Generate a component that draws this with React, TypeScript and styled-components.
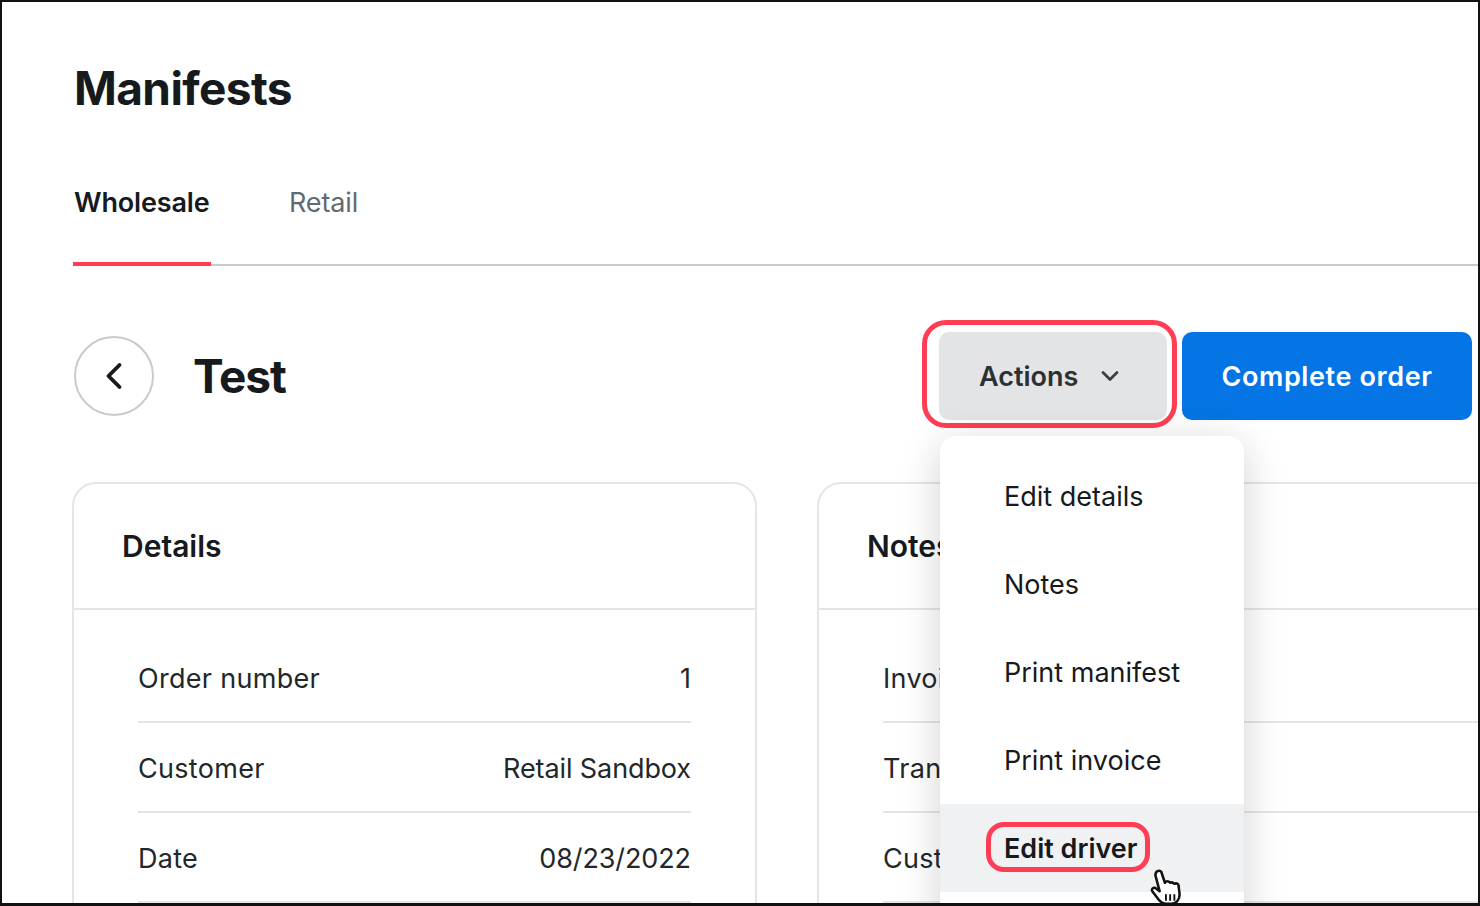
import React from "react";
import styled, { createGlobalStyle } from "styled-components";
import { ChevronDown, ChevronLeft } from "lucide-react";

const GlobalStyle = createGlobalStyle`
  html, body {
    margin: 0;
    padding: 0;
    background: #fff;
  }
  * {
    box-sizing: border-box;
  }
`;

const Frame = styled.div`
  width: 1480px;
  height: 906px;
  border: 2px solid #111;
  border-bottom-width: 3px;
  overflow: hidden;
  background: #fff;
  padding-left: 71px;
  font-family: Inter, "Liberation Sans", sans-serif;
  color: #171a1c;
`;

const PageTitle = styled.h1`
  margin: 0;
  padding: 59px 0 0 1px;
  font-size: 46px;
  line-height: 54px;
  font-weight: 700;
  letter-spacing: -0.6px;
`;

const TabBar = styled.div`
  display: flex;
  margin-top: 70px;
  height: 81px;
  border-bottom: 2px solid #c8cacc;
`;

const Tab = styled.div<{ $active?: boolean }>`
  height: 81px;
  padding-left: 1px;
  width: ${(p) => (p.$active ? "138px" : "auto")};
  margin-right: 77px;
  font-size: 27px;
  line-height: 36px;
  letter-spacing: -0.15px;
  font-weight: ${(p) => (p.$active ? 600 : 400)};
  color: ${(p) => (p.$active ? "#171a1c" : "#5f6b70")};
  border-bottom: ${(p) => (p.$active ? "4px solid #ff3e55" : "none")};
`;

const Toolbar = styled.div`
  display: flex;
  align-items: center;
  height: 88px;
  margin-top: 66px;
  padding-right: 6px;
`;

const BackButton = styled.div`
  width: 80px;
  height: 80px;
  margin-left: 1px;
  border: 2px solid #c8cacc;
  border-radius: 50%;
  display: flex;
  align-items: center;
  justify-content: center;
`;

const OrderTitle = styled.h2`
  margin: 0 0 0 39px;
  flex: 1;
  font-size: 46px;
  line-height: 54px;
  font-weight: 700;
  letter-spacing: -1.1px;
`;

const ActionsWrap = styled.div`
  position: relative;
  margin-right: 15px;
  z-index: 2;
`;

const ActionsButton = styled.div`
  width: 228px;
  height: 88px;
  padding-left: 40px;
  border-radius: 10px;
  background: #e3e4e6;
  color: #2b3033;
  font-size: 27px;
  font-weight: 600;
  display: flex;
  align-items: center;
  gap: 18px;
`;

const Highlight = styled.span`
  position: absolute;
  border: 5px solid #ff3e55;
  pointer-events: none;
`;

const ActionsHighlight = styled(Highlight)`
  left: -17px;
  top: -12px;
  width: 255px;
  height: 108px;
  border-radius: 24px;
`;

const PrimaryButton = styled.div`
  width: 290px;
  height: 88px;
  border-radius: 10px;
  background: #0574e4;
  color: #fff;
  font-size: 27px;
  font-weight: 600;
  letter-spacing: 0.6px;
  display: flex;
  align-items: center;
  justify-content: center;
`;

const Menu = styled.div`
  position: absolute;
  left: 1px;
  top: 104px;
  width: 304px;
  height: 520px;
  padding-top: 16px;
  background: #fff;
  border-radius: 16px;
  box-shadow: 0 8px 40px rgba(0, 0, 0, 0.18);
`;

const MenuItem = styled.div<{ $hover?: boolean }>`
  position: relative;
  height: 88px;
  padding-left: 64px;
  display: flex;
  align-items: center;
  font-size: 27px;
  color: #171a1c;
  font-weight: ${(p) => (p.$hover ? 600 : 400)};
  background: ${(p) => (p.$hover ? "#f0f1f3" : "transparent")};
`;

const DriverHighlight = styled(Highlight)`
  left: 46px;
  top: 18px;
  width: 164px;
  height: 50px;
  border-radius: 18px;
`;

const Pointer = styled.svg`
  position: absolute;
  left: 210px;
  top: 64px;
`;

const Cards = styled.div`
  display: flex;
  gap: 60px;
  margin-top: 62px;
  margin-left: -1px;
`;

const Card = styled.section<{ $wide?: boolean }>`
  flex: 0 0 ${(p) => (p.$wide ? "900px" : "685px")};
  height: 600px;
  border: 2px solid #e4e5e7;
  border-radius: 24px;
`;

const CardHeader = styled.div`
  height: 126px;
  padding: 43px 0 0 48px;
  border-bottom: 2px solid #e4e5e7;
  font-size: 30px;
  line-height: 38px;
  font-weight: 600;
`;

const Rows = styled.div`
  padding: 23px 64px 0;
`;

const Row = styled.div`
  display: flex;
  justify-content: space-between;
  align-items: center;
  height: 90px;
  padding-top: 2px;
  border-bottom: 2px solid #e4e5e7;
  font-size: 27px;
  color: #22272a;
`;

const RowLabel = styled.span`
  letter-spacing: 0.3px;
`;

const RowValue = styled.span`
  letter-spacing: -0.1px;
`;

const details = [
  ["Order number", "1"],
  ["Customer", "Retail Sandbox"],
  ["Date", "08/23/2022"],
];

const notes = ["Invoice", "Transporter", "Customer"];

const menuItems = ["Edit details", "Notes", "Print manifest", "Print invoice"];

const App = () => {
  return (
    <Frame>
      <GlobalStyle />
      <PageTitle>Manifests</PageTitle>
      <TabBar>
        <Tab $active>Wholesale</Tab>
        <Tab>Retail</Tab>
      </TabBar>
      <Toolbar>
        <BackButton>
          <ChevronLeft size={44} strokeWidth={2.1} color="#171a1c" />
        </BackButton>
        <OrderTitle>Test</OrderTitle>
        <ActionsWrap>
          <ActionsButton>
            Actions
            <ChevronDown size={28} strokeWidth={2.4} color="#3a4044" />
          </ActionsButton>
          <ActionsHighlight />
          <Menu>
            {menuItems.map((item) => (
              <MenuItem key={item}>{item}</MenuItem>
            ))}
            <MenuItem $hover>
              Edit driver
              <DriverHighlight />
              <Pointer width="34" height="40" viewBox="0 0 32 38">
                <path
                  d="M7 3c2-1 4 0 4 2l3 9 1-1c2-1 3 0 4 1 2-1 3 0 4 1 2-1 4 0 4 2l1 8c0 5-3 9-8 9h-5c-3 0-5-2-7-4L2 22c-1-2 1-4 3-3l4 3L5 7C5 5 5 4 7 3z"
                  fill="#fff"
                  stroke="#111"
                  strokeWidth="2.4"
                  strokeLinejoin="round"
                />
                <path d="M15 25v6M19 25v6M23 25v6" stroke="#111" strokeWidth="1.8" />
              </Pointer>
            </MenuItem>
          </Menu>
        </ActionsWrap>
        <PrimaryButton>Complete order</PrimaryButton>
      </Toolbar>
      <Cards>
        <Card>
          <CardHeader>Details</CardHeader>
          <Rows>
            {details.map(([label, value]) => (
              <Row key={label}>
                <RowLabel>{label}</RowLabel>
                <RowValue>{value}</RowValue>
              </Row>
            ))}
          </Rows>
        </Card>
        <Card $wide>
          <CardHeader>Notes</CardHeader>
          <Rows>
            {notes.map((label) => (
              <Row key={label}>
                <RowLabel>{label}</RowLabel>
              </Row>
            ))}
          </Rows>
        </Card>
      </Cards>
    </Frame>
  );
};

export default App;
